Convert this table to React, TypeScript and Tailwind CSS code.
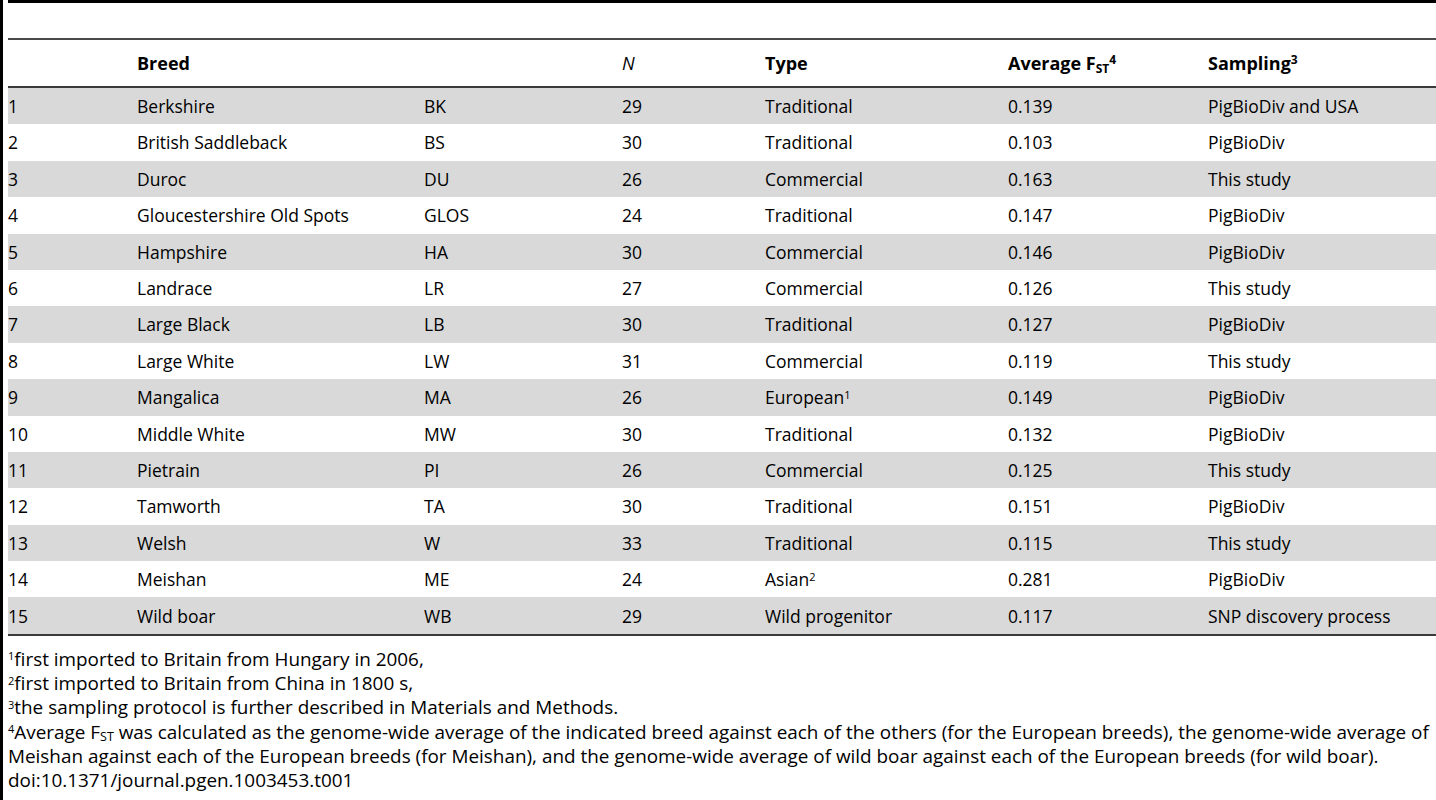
import React from "react";

type Row = {
  n: string;
  breed: string;
  abbr: string;
  N: string;
  type: React.ReactNode;
  fst: string;
  sampling: string;
};

const rows: Row[] = [
  { n: "1", breed: "Berkshire", abbr: "BK", N: "29", type: "Traditional", fst: "0.139", sampling: "PigBioDiv and USA" },
  { n: "2", breed: "British Saddleback", abbr: "BS", N: "30", type: "Traditional", fst: "0.103", sampling: "PigBioDiv" },
  { n: "3", breed: "Duroc", abbr: "DU", N: "26", type: "Commercial", fst: "0.163", sampling: "This study" },
  { n: "4", breed: "Gloucestershire Old Spots", abbr: "GLOS", N: "24", type: "Traditional", fst: "0.147", sampling: "PigBioDiv" },
  { n: "5", breed: "Hampshire", abbr: "HA", N: "30", type: "Commercial", fst: "0.146", sampling: "PigBioDiv" },
  { n: "6", breed: "Landrace", abbr: "LR", N: "27", type: "Commercial", fst: "0.126", sampling: "This study" },
  { n: "7", breed: "Large Black", abbr: "LB", N: "30", type: "Traditional", fst: "0.127", sampling: "PigBioDiv" },
  { n: "8", breed: "Large White", abbr: "LW", N: "31", type: "Commercial", fst: "0.119", sampling: "This study" },
  {
    n: "9",
    breed: "Mangalica",
    abbr: "MA",
    N: "26",
    type: (
      <>
        European<sup className="text-[11px]">1</sup>
      </>
    ),
    fst: "0.149",
    sampling: "PigBioDiv",
  },
  { n: "10", breed: "Middle White", abbr: "MW", N: "30", type: "Traditional", fst: "0.132", sampling: "PigBioDiv" },
  { n: "11", breed: "Pietrain", abbr: "PI", N: "26", type: "Commercial", fst: "0.125", sampling: "This study" },
  { n: "12", breed: "Tamworth", abbr: "TA", N: "30", type: "Traditional", fst: "0.151", sampling: "PigBioDiv" },
  { n: "13", breed: "Welsh", abbr: "W", N: "33", type: "Traditional", fst: "0.115", sampling: "This study" },
  {
    n: "14",
    breed: "Meishan",
    abbr: "ME",
    N: "24",
    type: (
      <>
        Asian<sup className="text-[11px]">2</sup>
      </>
    ),
    fst: "0.281",
    sampling: "PigBioDiv",
  },
  { n: "15", breed: "Wild boar", abbr: "WB", N: "29", type: "Wild progenitor", fst: "0.117", sampling: "SNP discovery process" },
];

const cols = "grid grid-cols-[129px_287px_198px_143px_243px_200px_1fr] items-center";

export default function App() {
  return (
    <div
      className="flex w-[1436px] h-[800px] overflow-hidden bg-white text-black"
      style={{ fontFamily: '"Open Sans", "Noto Sans", sans-serif' }}
    >
      <div className="w-[3px] shrink-0 bg-black" />
      <div className="ml-[5px] flex-1 min-w-0">
        <div className="h-[40px] border-t-[3px] border-black border-b-2 border-b-[#4a4a4a]" />
        <div className={`${cols} h-[48px] border-b-2 border-[#3a3a3a] text-[18px] font-bold`}>
          <div />
          <div>Breed</div>
          <div />
          <div className="italic font-normal">N</div>
          <div>Type</div>
          <div className="whitespace-nowrap">
            Average F<sub className="text-[12px]">ST</sub>
            <sup className="text-[12px]">4</sup>
          </div>
          <div>
            Sampling<sup className="text-[12px]">3</sup>
          </div>
        </div>
        <div className="border-b-2 border-[#3a3a3a]">
          {rows.map((r, i) => (
            <div
              key={r.n}
              className={`${cols} h-[36.4px] text-[17.5px] ${i % 2 === 0 ? "bg-[#d9d9d9]" : "bg-white"}`}
            >
              <div>{r.n}</div>
              <div>{r.breed}</div>
              <div>{r.abbr}</div>
              <div>{r.N}</div>
              <div>{r.type}</div>
              <div>{r.fst}</div>
              <div className="whitespace-nowrap">{r.sampling}</div>
            </div>
          ))}
        </div>
        <div className="pt-[11px] text-[18.9px] leading-[24.3px] whitespace-nowrap">
          <div>
            <sup className="text-[11px]">1</sup>first imported to Britain from Hungary in 2006,
          </div>
          <div>
            <sup className="text-[11px]">2</sup>first imported to Britain from China in 1800 s,
          </div>
          <div>
            <sup className="text-[11px]">3</sup>the sampling protocol is further described in Materials and Methods.
          </div>
          <div>
            <sup className="text-[11px]">4</sup>Average F<sub className="text-[12.5px] -bottom-[2px]">ST</sub> was
            calculated as the genome-wide average of the indicated breed against each of the others (for the European
            breeds), the genome-wide average of
          </div>
          <div>
            Meishan against each of the European breeds (for Meishan), and the genome-wide average of wild boar against
            each of the European breeds (for wild boar).
          </div>
          <div>doi:10.1371/journal.pgen.1003453.t001</div>
        </div>
      </div>
    </div>
  );
}
